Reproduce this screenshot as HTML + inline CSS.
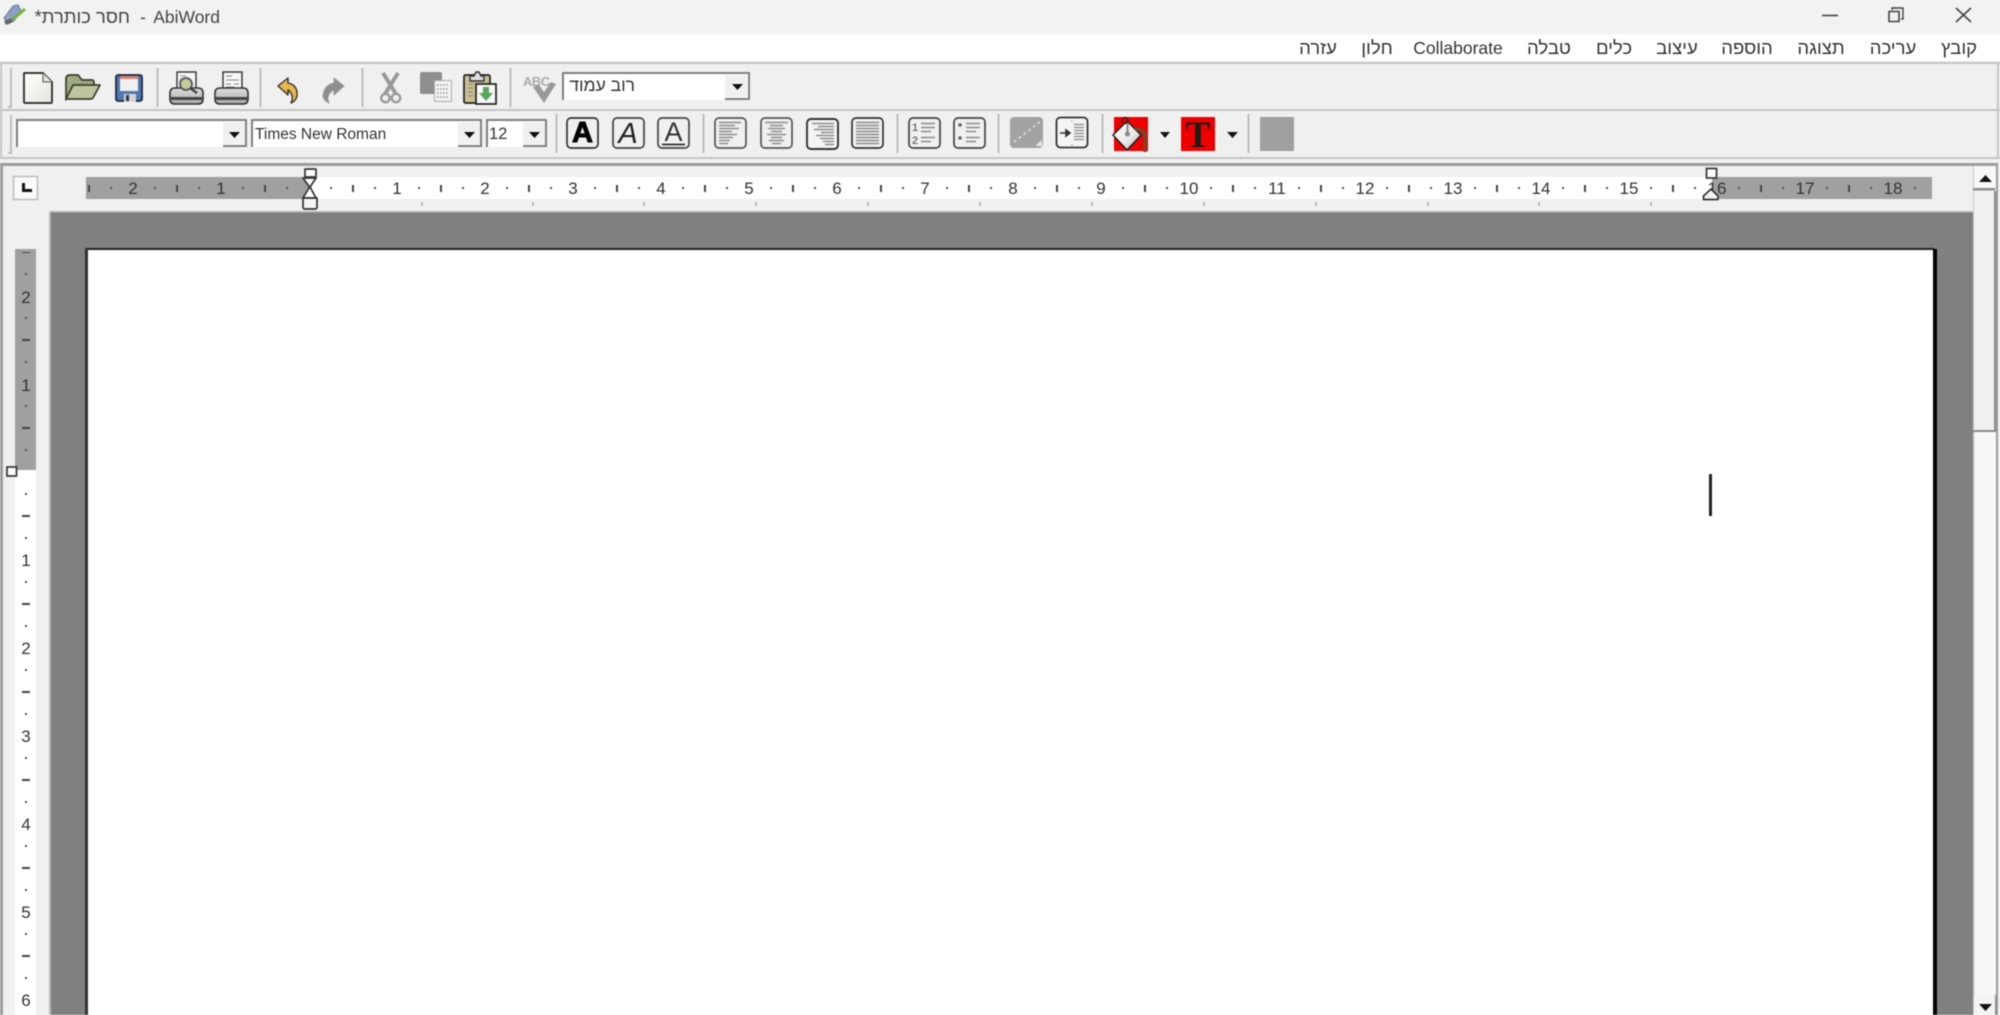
<!DOCTYPE html>
<html lang="he">
<head>
<meta charset="utf-8">
<title>AbiWord</title>
<style>
html,body{margin:0;padding:0;width:2000px;height:1015px;overflow:hidden;background:#fff}
svg{display:block;filter:blur(.55px)}
text{font-family:"Liberation Sans","Noto Sans CJK SC",sans-serif}
.m{font-size:18.5px;fill:#333;text-anchor:middle}
.n{font-size:17px;fill:#333;text-anchor:middle}
.c{font-size:15.500px;fill:#333}
</style>
</head>
<body>
<svg width="2000" height="1015" viewBox="0 0 2000 1015" xmlns="http://www.w3.org/2000/svg">
<defs>
<pattern id="hr" x="309" y="177" width="88" height="22" patternUnits="userSpaceOnUse">
<rect x="21" y="10" width="2" height="2" fill="#555"/><rect x="43" y="8" width="2" height="7" fill="#444"/><rect x="65" y="10" width="2" height="2" fill="#555"/>
</pattern>
<pattern id="vr" x="15" y="472" width="21" height="88" patternUnits="userSpaceOnUse">
<rect x="10" y="21" width="2" height="2" fill="#555"/><rect x="7" y="43" width="8" height="2" fill="#444"/><rect x="10" y="65" width="2" height="2" fill="#555"/>
</pattern>
<linearGradient id="pg" x1="0" y1="0" x2="1" y2="1"><stop offset="0" stop-color="#fff"/><stop offset="1" stop-color="#e4e4dc"/></linearGradient>
<linearGradient id="bk" x1="0" y1="0" x2="1" y2="1"><stop offset="0" stop-color="#fff"/><stop offset=".6" stop-color="#e8e8e8"/><stop offset="1" stop-color="#aaa"/></linearGradient>
<linearGradient id="pr" x1="0" y1="0" x2="0" y2="1"><stop offset="0" stop-color="#ddd"/><stop offset="1" stop-color="#aaa"/></linearGradient>
</defs>

<!-- title bar -->
<rect x="0" y="0" width="2000" height="34" fill="#f2f2f2"/>
<g>
<path d="M4 18L13 6L18 5L21 11L14 21L8 24Z" fill="#8e9fc8" stroke="#6a7a98"/>
<path d="M12 20L25 9" stroke="#7ab040" stroke-width="3"/>
<path d="M5 23L12 20" stroke="#666" stroke-width="4"/>
</g>
<text x="220" y="23" text-anchor="end" style="font-size:17.5px;fill:#444">AbiWord</text>
<text x="143" y="23" text-anchor="middle" style="font-size:17.5px;fill:#444">-</text>
<text x="130" y="23" direction="rtl" style="font-size:18.4px;fill:#444">חסר כותרת*</text>
<path d="M1822 15.500H1838" stroke="#444" stroke-width="1.600"/>
<path d="M1889 11.500h10v10h-10z" fill="none" stroke="#444" stroke-width="1.600"/>
<path d="M1892 10V8h11v11h-2" fill="none" stroke="#444" stroke-width="1.400"/>
<path d="M1956 8L1971 22M1971 8L1956 22" stroke="#444" stroke-width="1.600"/>

<!-- menu -->
<rect x="0" y="34" width="2000" height="27" fill="#fff"/>
<text class="m" x="1959" y="54">קובץ</text>
<text class="m" x="1893" y="54">עריכה</text>
<text class="m" x="1821" y="54">תצוגה</text>
<text class="m" x="1747" y="54">הוספה</text>
<text class="m" x="1677" y="54">עיצוב</text>
<text class="m" x="1614" y="54">כלים</text>
<text class="m" x="1549" y="54">טבלה</text>
<text class="m" x="1458" y="54" style="font-size:17.5px">Collaborate</text>
<text class="m" x="1377" y="54">חלון</text>
<text class="m" x="1318" y="54">עזרה</text>

<!-- toolbars -->
<rect x="0" y="61" width="2000" height="102" fill="#f0f0f0"/>
<rect x="0" y="62" width="2000" height="2" fill="#c4c4c4"/>
<rect x="0" y="109" width="2000" height="2" fill="#c4c4c4"/>
<rect x="0" y="157" width="2000" height="2" fill="#c4c4c4"/>
<rect x="0" y="62" width="2" height="97" fill="#c4c4c4"/>
<rect x="1997" y="62" width="2" height="97" fill="#c4c4c4"/>
<!-- grippers -->
<path d="M8 107h3V68M8 153h3V115" fill="none" stroke="#bdbdbd" stroke-width="2"/>
<!-- separators -->
<path d="M157.500 68V107M260.500 68V107M362.500 68V107M510.500 68V107M556.500 114V153M703.500 114V153M897.500 114V153M998.500 114V153M1102.500 114V153M1248.500 114V153" stroke="#bcbcbc" stroke-width="2"/>

<!-- new -->
<path d="M24 73H43L52 82V102Q52 103 51 103H25Q24 103 24 102Z" fill="url(#pg)" stroke="#222" stroke-width="1.700" stroke-linejoin="round"/>
<path d="M43 73V82H52" fill="#e0e0e0" stroke="#555"/>
<!-- open -->
<path d="M66 99V79Q66 75 70 75H78L82 80H92Q94 80 94 83V88H74Z" fill="#a0a880" stroke="#3c3c30" stroke-width="1.700"/>
<path d="M66 99L73 85H100L94 96Q93 99 90 99Z" fill="#bec59c" stroke="#3c3c30" stroke-width="1.700" stroke-linejoin="round"/>
<!-- save -->
<rect x="116" y="75" width="26" height="26" rx="2" fill="#4f78b2" stroke="#1e2a42" stroke-width="1.800"/>
<rect x="120" y="76" width="18" height="15" fill="#f0f0f0"/>
<rect x="120" y="76" width="18" height="3" fill="#e0806e"/>
<rect x="124" y="94" width="12" height="8" fill="#d4d4d4"/>
<rect x="126" y="95" width="3" height="6" fill="#334"/>
<!-- preview -->
<rect x="177" y="72" width="19" height="20" fill="#f6f6f6" stroke="#333" stroke-width="1.400"/>
<path d="M180 76h6M180 79h4" stroke="#888"/>
<path d="M170 93Q170 88 175 88H198Q203 88 203 93V99Q203 104 198 104H175Q170 104 170 99Z" fill="url(#pr)" stroke="#333" stroke-width="1.600"/>
<rect x="171" y="97" width="31" height="3" fill="#444"/>
<circle cx="186" cy="84" r="6" fill="#c4cc9c" stroke="#555" stroke-width="1.800"/>
<path d="M190 88L197 93" stroke="#444" stroke-width="2.400"/>
<!-- print -->
<rect x="223" y="72" width="19" height="20" fill="#f6f6f6" stroke="#333" stroke-width="1.400"/>
<path d="M226 76h6M226 80h13M226 84h5M234 84h5M226 87h8" stroke="#888"/>
<path d="M215 93Q215 88 220 88H243Q248 88 248 93V99Q248 104 243 104H220Q215 104 215 99Z" fill="url(#pr)" stroke="#333" stroke-width="1.600"/>
<rect x="216" y="97" width="31" height="3" fill="#444"/>
<!-- undo / redo -->
<path d="M278 86L288 78V83Q298 85 297 96Q296 101 291 103Q294 96 290 92Q289 90 288 90V95Z" fill="#e8b84a" stroke="#333" stroke-width="1.400" stroke-linejoin="round"/>
<path d="M344 86L334 78V83Q324 85 323 96Q324 101 329 103Q326 96 331 92Q333 90 334 90V95Z" fill="#8e8e8e" stroke="#999" stroke-linejoin="round"/>
<!-- cut -->
<path d="M383 73L396 94M398 73L385 94" stroke="#9a9a9a" stroke-width="4"/>
<circle cx="385.500" cy="98" r="4.200" fill="#f0f0f0" stroke="#9a9a9a" stroke-width="2.400"/>
<circle cx="396" cy="98" r="4.200" fill="#f0f0f0" stroke="#9a9a9a" stroke-width="2.400"/>
<!-- copy -->
<rect x="420" y="72" width="22" height="22" rx="2" fill="#8e8e8e"/>
<rect x="434.500" y="80.500" width="17" height="21" rx="1" fill="#f2f2f2" stroke="#aaa"/>
<path d="M437 85h12M437 89h12M437 93h12M437 97h12" stroke="#999" stroke-dasharray="1.500 1.500" stroke-width="1.500"/>
<!-- paste -->
<rect x="464" y="75" width="26" height="28" rx="1.500" fill="#c9bf94" stroke="#222" stroke-width="1.700"/>
<path d="M470 81V76H474L476 72H479L481 76H484V81Z" fill="#ddd" stroke="#333" stroke-width="1.400"/>
<path d="M468 84h5M468 88h5M468 92h5M468 96h5" stroke="#8a8060"/>
<rect x="476" y="84" width="20" height="20" fill="#f8f8f8" stroke="#222" stroke-width="1.700"/>
<path d="M483 87h6v6h4l-7 8l-7-8h4z" fill="#58a65c"/>
<!-- spell -->
<text x="523" y="86" style="font-size:13px;font-weight:bold;fill:#aaa" textLength="27">ABC</text>
<path d="M533 87L539 85L544 92L551 82L556 84L544 103Z" fill="#9a9a9a"/>

<!-- zoom combo -->
<rect x="563" y="73" width="186" height="27" fill="#fff"/>
<path d="M563 100V73H749V100" fill="none" stroke="#808080" stroke-width="2"/>
<rect x="725" y="75" width="22" height="22" fill="#f0f0f0"/>
<path d="M725 99H749" stroke="#808080" stroke-width="2"/>
<path d="M732 84h11l-5.500 6z" fill="#111"/>
<text x="635" y="91" direction="rtl" style="font-size:17.5px;fill:#333">רוב עמוד</text>

<!-- style combo -->
<rect x="17" y="120" width="229" height="27" fill="#fff"/>
<path d="M17 147V120H246V147" fill="none" stroke="#808080" stroke-width="2"/>
<rect x="223" y="122" width="22" height="22" fill="#f0f0f0"/>
<path d="M223 146H246" stroke="#808080" stroke-width="2"/>
<path d="M229 132h11l-5.500 6z" fill="#111"/>
<!-- font combo -->
<rect x="252" y="120" width="229" height="27" fill="#fff"/>
<path d="M252 147V120H481V147" fill="none" stroke="#808080" stroke-width="2"/>
<rect x="458" y="122" width="22" height="22" fill="#f0f0f0"/>
<path d="M458 146H481" stroke="#808080" stroke-width="2"/>
<path d="M464 132h11l-5.500 6z" fill="#111"/>
<text class="c" x="255" y="139">Times New Roman</text>
<!-- size combo -->
<rect x="487" y="120" width="60" height="27" fill="#fff"/>
<path d="M487 147V120H546V147" fill="none" stroke="#808080" stroke-width="2"/>
<rect x="523" y="122" width="22" height="22" fill="#f0f0f0"/>
<path d="M523 146H546" stroke="#808080" stroke-width="2"/>
<path d="M529 132h11l-5.500 6z" fill="#111"/>
<text class="c" x="489" y="139" style="font-size:16.500px">12</text>

<!-- B I U -->
<rect x="567" y="118" width="31" height="30" rx="4" fill="#f0f0f0" stroke="#333" stroke-width="1.700"/>
<text x="582.500" y="142" text-anchor="middle" style="font-size:29px;font-weight:bold;fill:#000;stroke:#000;stroke-width:1">A</text>
<rect x="613" y="118" width="31" height="30" rx="4" fill="#f0f0f0" stroke="#444" stroke-width="1.700"/>
<text x="628" y="143" text-anchor="middle" style="font-size:29px;font-style:italic;fill:#222">A</text>
<rect x="658" y="118" width="31" height="30" rx="4" fill="#f0f0f0" stroke="#444" stroke-width="1.700"/>
<text x="673.500" y="141" text-anchor="middle" style="font-size:27px;fill:#333">A</text>
<path d="M662 144.500H685" stroke="#333" stroke-width="1.700"/>

<!-- aligns -->
<rect x="715" y="118" width="31" height="30" rx="4" fill="#f0f0f0" stroke="#555" stroke-width="1.700"/>
<path d="M719 122.500h22M719 125.500h16M719 128.500h20M719 131.500h13M719 134.500h18M719 137.500h14M719 140.500h11M719 143.500h9" stroke="#8c8c8c" stroke-width="1.400"/>
<rect x="761" y="118" width="31" height="30" rx="4" fill="#f0f0f0" stroke="#555" stroke-width="1.700"/>
<path d="M765 122.500h23M770 125.500h13M768 128.500h17M771 131.500h11M767 134.500h19M771 137.500h11M769 140.500h15M772 143.500h9" stroke="#8c8c8c" stroke-width="1.400"/>
<rect x="807" y="119" width="31" height="30" rx="4" fill="#f4f4f4" stroke="#333" stroke-width="1.900"/>
<path d="M812 123.500h22M818 126.500h16M814 129.500h20M821 132.500h13M816 135.500h18M820 138.500h14M823 141.500h11M825 144.500h9" stroke="#8c8c8c" stroke-width="1.400"/>
<rect x="852" y="118" width="31" height="30" rx="4" fill="#f0f0f0" stroke="#333" stroke-width="1.700"/>
<path d="M856 122.500h23M856 125.500h23M856 128.500h23M856 131.500h23M856 134.500h23M856 137.500h23M856 140.500h23M856 143.500h23" stroke="#8c8c8c" stroke-width="1.400"/>

<!-- lists -->
<rect x="909" y="118" width="31" height="30" rx="4" fill="#f0f0f0" stroke="#444" stroke-width="1.700"/>
<text x="915" y="131" text-anchor="middle" style="font-size:11px;font-weight:bold;fill:#777">1</text>
<text x="915" y="144" text-anchor="middle" style="font-size:11px;font-weight:bold;fill:#777">2</text>
<path d="M921 123.500h14M921 127.500h14M921 131.500h10M921 137.500h14M921 141.500h10" stroke="#8c8c8c" stroke-width="1.600"/>
<rect x="954" y="118" width="31" height="30" rx="4" fill="#f0f0f0" stroke="#444" stroke-width="1.700"/>
<circle cx="960" cy="125" r="1.800" fill="#666"/><circle cx="960" cy="138" r="1.800" fill="#666"/>
<path d="M966 123.500h14M966 127.500h14M966 131.500h10M966 137.500h14M966 141.500h10" stroke="#8c8c8c" stroke-width="1.600"/>

<!-- indent disabled -->
<rect x="1010" y="117" width="33" height="31" rx="4" fill="#a2a2a2"/>
<path d="M1014 142L1041 121" stroke="#ddd" stroke-width="1.600" stroke-dasharray="3 3"/>
<path d="M1042 140v6h-7z" fill="#e8e8e8"/>
<!-- indent -->
<rect x="1056.500" y="117.500" width="31" height="30" rx="4" fill="#f4f4f4" stroke="#333" stroke-width="1.800"/>
<path d="M1074 124.500h10M1074 127.500h10M1074 130.500h10M1074 133.500h10M1074 136.500h10M1074 139.500h10" stroke="#888" stroke-width="1.300"/>
<path d="M1072 120.500v1M1072 144.500v1" stroke="#777"/>
<path d="M1060 133H1066M1066 130l4 3l-4 3z" fill="#333" stroke="#333" stroke-width="1.600"/>

<!-- fill colour -->
<rect x="1114" y="117" width="34" height="34" fill="#ee0000"/>
<path d="M1127 121L1141 135L1127 150L1113 135Z" fill="url(#bk)" stroke="#222" stroke-width="1.500"/>
<path d="M1135 129Q1145 129 1145 137V152" fill="none" stroke="#7a4528" stroke-width="3.500"/>
<circle cx="1125" cy="120.500" r="3" fill="none" stroke="#5a1010" stroke-width="1.500"/>
<path d="M1127.500 123V134" stroke="#888" stroke-width="2"/>
<circle cx="1127.500" cy="134" r="2.500" fill="#888"/>
<path d="M1160 132h10l-5 6z" fill="#111"/>
<!-- text colour -->
<rect x="1181" y="117" width="34" height="34" fill="#ee0000"/>
<text x="1198" y="147" text-anchor="middle" style="font-family:'Liberation Serif',serif;font-size:37px;font-weight:bold;fill:#1c1c14">T</text>
<path d="M1227 132h11l-5.500 6z" fill="#111"/>
<!-- disabled square -->
<rect x="1260" y="117" width="34" height="34" fill="#a0a0a0"/>

<!-- frame -->
<rect x="0" y="159" width="2000" height="856" fill="#f0f0f0"/>
<rect x="0" y="163" width="1998" height="3" fill="#9c9c9c"/>
<rect x="0" y="163" width="3" height="852" fill="#9c9c9c"/>
<rect x="1996" y="163" width="2" height="852" fill="#9c9c9c"/>

<!-- corner button -->
<rect x="13.500" y="176.500" width="24" height="23" fill="#fafafa" stroke="#bbb" stroke-width="1.500"/>
<path d="M22 183V192H32V189H25V183Z" fill="#111"/>

<!-- horizontal ruler -->
<rect x="86" y="177" width="223" height="22" fill="#a0a0a0"/>
<rect x="309" y="177" width="1403" height="22" fill="#fff"/>
<rect x="1712" y="177" width="220" height="22" fill="#a0a0a0"/>
<rect x="86" y="177" width="1846" height="22" fill="url(#hr)"/>
<path d="M422 202v4M533 202v4M644 202v4M756 202v4M868 202v4M980 202v4M1092 202v4M1204 202v4M1316 202v4M1428 202v4M1539 202v4M1651 202v4" stroke="#aaa" stroke-width="1.500"/>
<text class="n" x="133" y="194">2</text>
<text class="n" x="221" y="194">1</text>
<text class="n" x="397" y="194">1</text>
<text class="n" x="485" y="194">2</text>
<text class="n" x="573" y="194">3</text>
<text class="n" x="661" y="194">4</text>
<text class="n" x="749" y="194">5</text>
<text class="n" x="837" y="194">6</text>
<text class="n" x="925" y="194">7</text>
<text class="n" x="1013" y="194">8</text>
<text class="n" x="1101" y="194">9</text>
<text class="n" x="1189" y="194">10</text>
<text class="n" x="1277" y="194">11</text>
<text class="n" x="1365" y="194">12</text>
<text class="n" x="1453" y="194">13</text>
<text class="n" x="1541" y="194">14</text>
<text class="n" x="1629" y="194">15</text>
<text class="n" x="1717" y="194">16</text>
<text class="n" x="1805" y="194">17</text>
<text class="n" x="1893" y="194">18</text>

<!-- left margin handles -->
<path d="M305 177V169.500Q305 169 306 169H315Q316 169 316 170V177Z" fill="#fff" stroke="#333" stroke-width="1.700"/>
<path d="M303 178H316L310 187L316 198H303L309.500 187Z" fill="#fff" stroke="#333" stroke-width="1.700" stroke-linejoin="round"/>
<path d="M303 198V207Q303 209 305 209H315Q317 209 317 207V198Z" fill="#f4f4f4" stroke="#333" stroke-width="1.700"/>
<!-- right margin handles -->
<rect x="1706.500" y="168.500" width="10" height="9.500" fill="#fff" stroke="#333" stroke-width="1.700"/>
<path d="M1703.500 199.500V196L1711 189L1718 196V199.500Z" fill="#f4f4f4" stroke="#333" stroke-width="1.700" stroke-linejoin="round"/>

<!-- vertical ruler -->
<rect x="15" y="249" width="21" height="221" fill="#a0a0a0"/>
<rect x="15" y="470" width="21" height="545" fill="#fff"/>
<rect x="15" y="252" width="21" height="763" fill="url(#vr)"/>
<text class="n" x="26" y="303">2</text>
<text class="n" x="26" y="391">1</text>
<text class="n" x="26" y="566">1</text>
<text class="n" x="26" y="654">2</text>
<text class="n" x="26" y="742">3</text>
<text class="n" x="26" y="830">4</text>
<text class="n" x="26" y="918">5</text>
<text class="n" x="26" y="1006">6</text>
<rect x="7" y="467" width="9.500" height="9" fill="#fff" stroke="#333" stroke-width="1.700"/>

<!-- document area -->
<rect x="50" y="212" width="1923" height="803" fill="#808080"/>
<rect x="49" y="212" width="2" height="803" fill="#b8b8b8"/>
<rect x="50" y="211" width="1923" height="1.500" fill="#b8b8b8"/>
<rect x="88" y="250" width="1845" height="765" fill="#fff"/>
<rect x="86" y="248" width="1848" height="2" fill="#222"/>
<rect x="85" y="248" width="3" height="767" fill="#333"/>
<rect x="1933" y="249" width="4" height="766" fill="#000"/>
<rect x="1709" y="474" width="3" height="42" fill="#222"/>

<!-- scrollbar -->
<rect x="1973" y="166" width="23" height="849" fill="#f7f7f7"/>
<rect x="1973" y="166" width="1.500" height="849" fill="#c8c8c8"/>
<rect x="1974" y="166" width="21" height="22" fill="#f8f8f8"/>
<path d="M1979 182h13l-6.500-7z" fill="#111"/>
<rect x="1973" y="188" width="22" height="2.500" fill="#8c8c8c"/>
<rect x="1974" y="191" width="20" height="239" fill="#f0f0f0"/>
<path d="M1973 431H1995V191" fill="none" stroke="#8c8c8c" stroke-width="2"/>
<rect x="1974" y="995" width="21" height="20" fill="#f4f4f4"/>
<path d="M1979 1004h13l-6.500 7z" fill="#111"/>
<rect x="1995" y="995" width="1.500" height="20" fill="#8c8c8c"/>
</svg>
</body>
</html>
